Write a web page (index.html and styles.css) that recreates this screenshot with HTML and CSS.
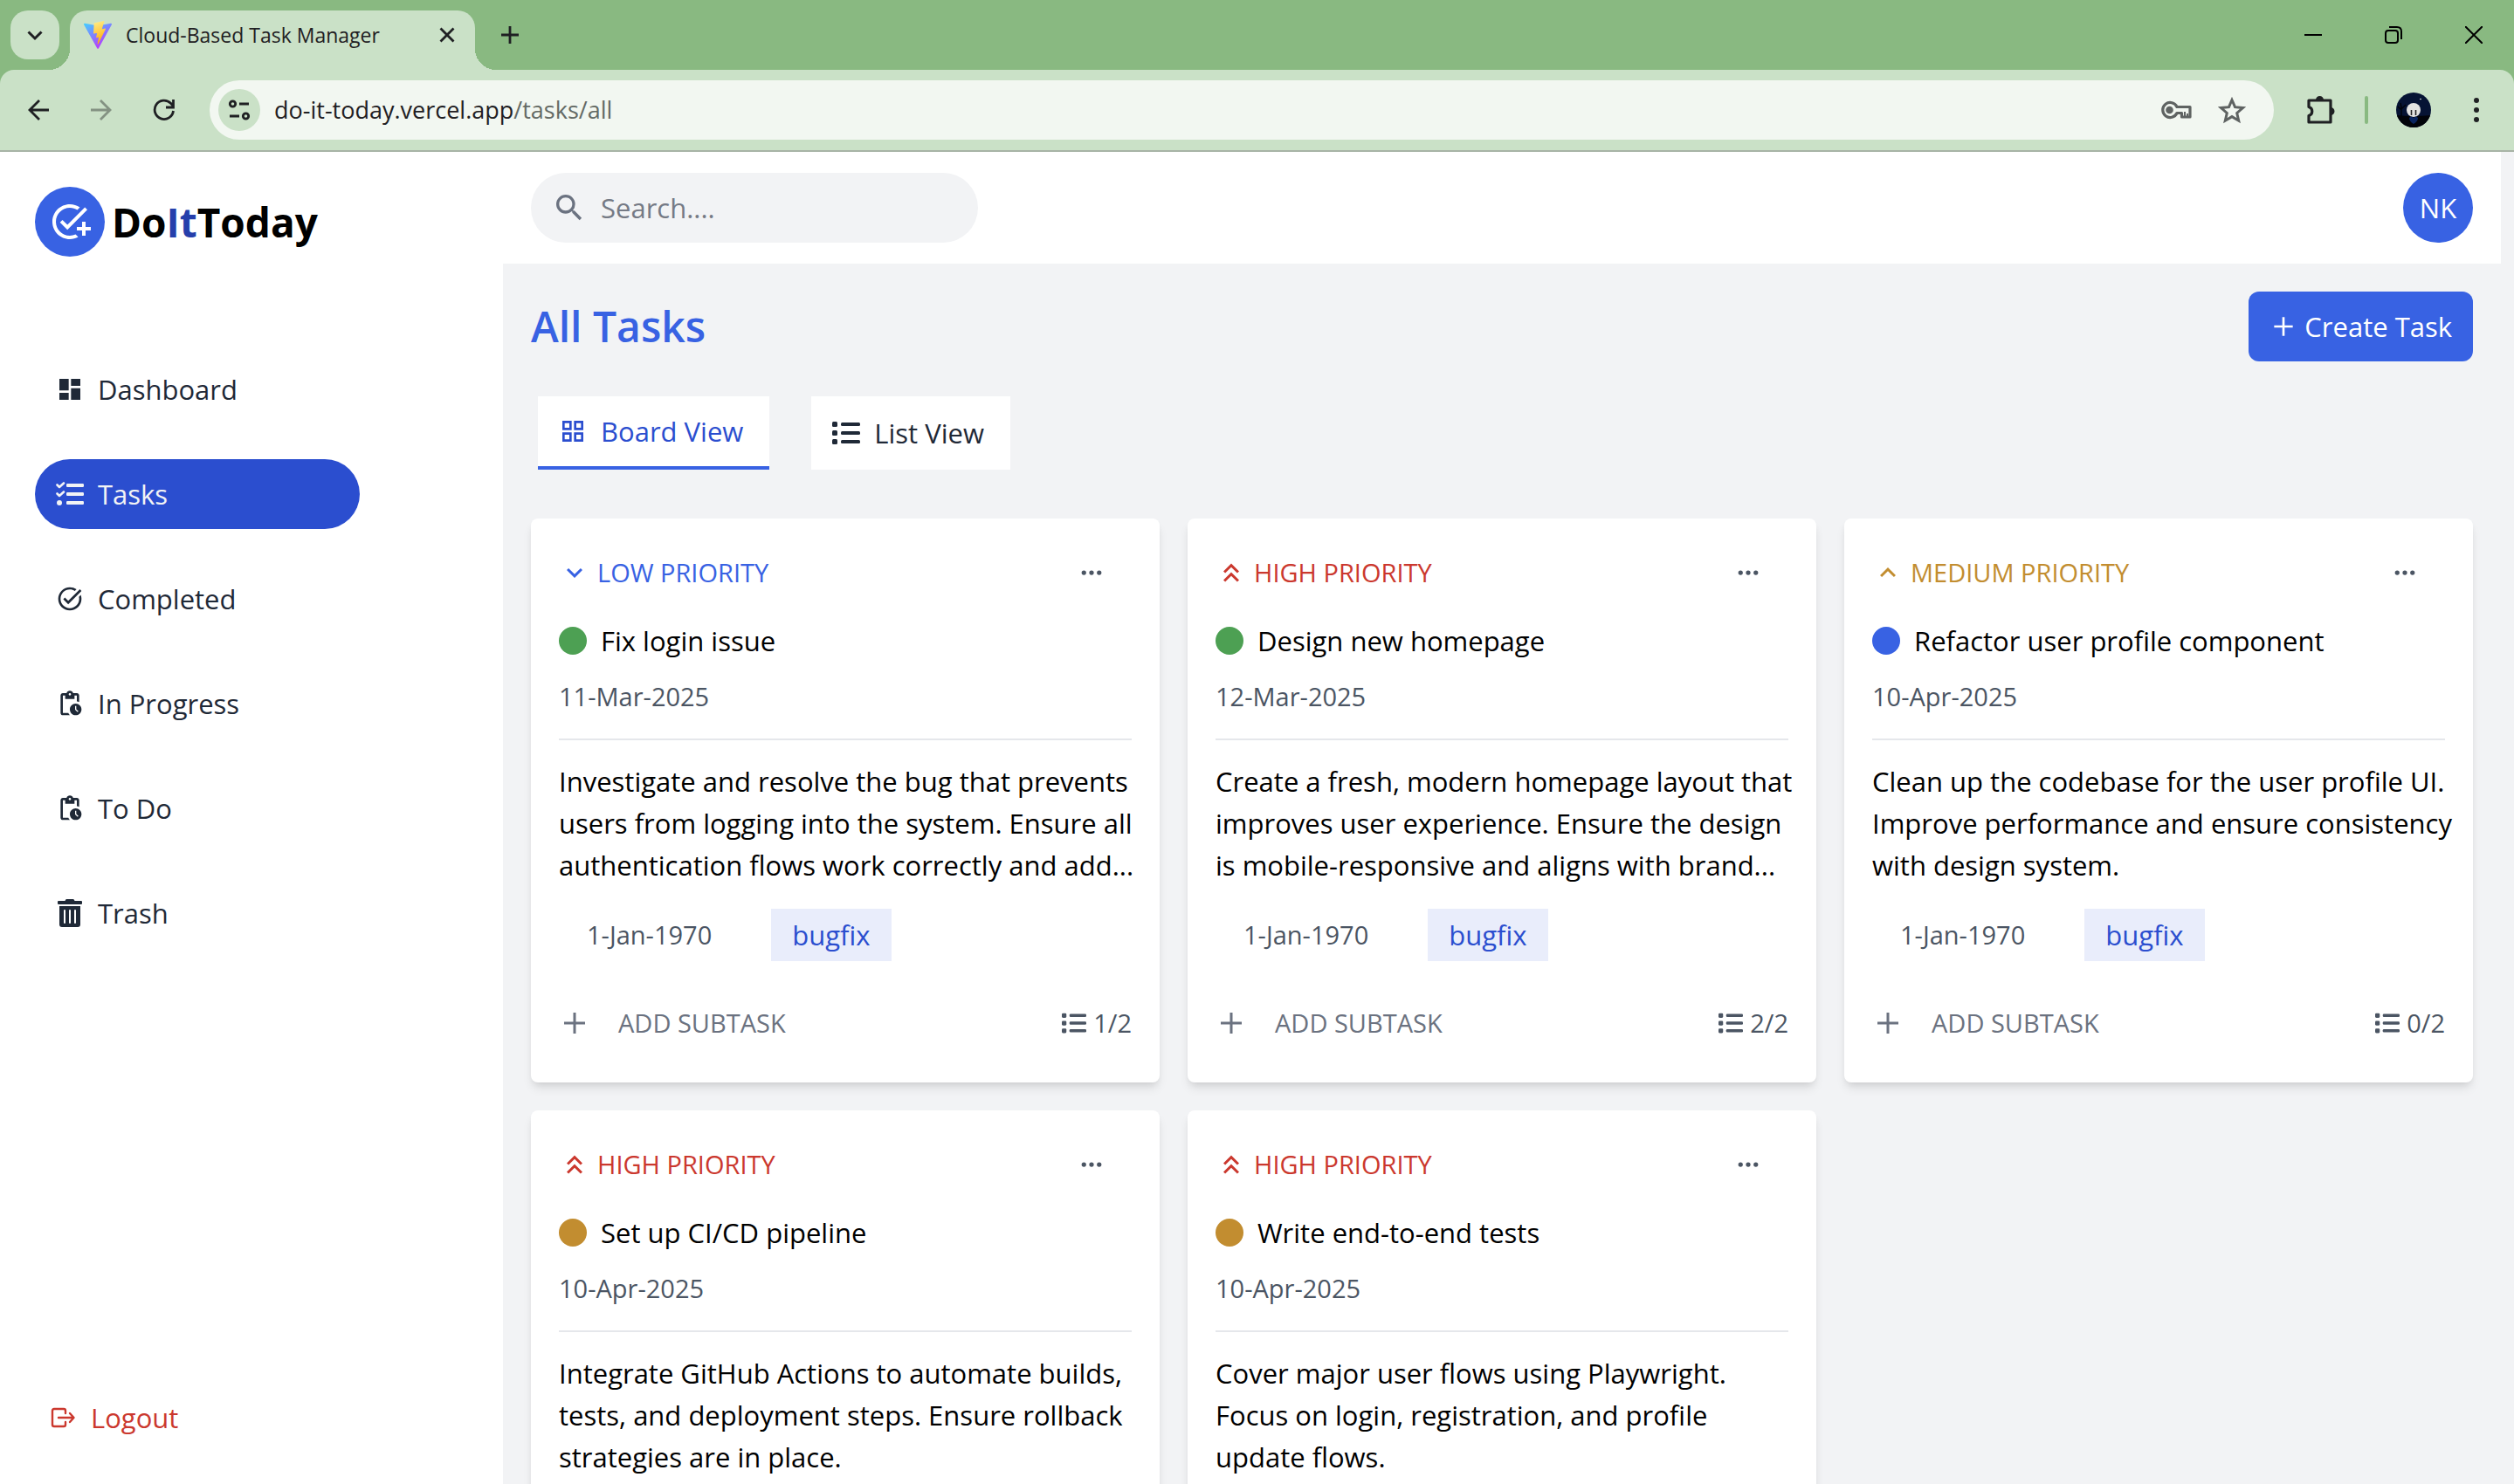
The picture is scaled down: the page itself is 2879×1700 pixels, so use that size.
FILE: index.html
```html
<!DOCTYPE html>
<html lang="en">
<head>
<meta charset="utf-8">
<meta name="viewport" content="width=device-width, initial-scale=1">
<title>Cloud-Based Task Manager</title>
<link rel="stylesheet" href="styles.css">
</head>
<body>
<svg class="sprite" aria-hidden="true">
  <symbol id="i-dashboard" viewBox="0 0 24 24"><path d="M3 13h8V3H3v10zm0 8h8v-6H3v6zm10 0h8V11h-8v10zm0-18v6h8V3h-8z"/></symbol>
  <symbol id="i-tasks" viewBox="0 0 32 32"><g fill="none" stroke="currentColor" stroke-width="2.6" stroke-linecap="round" stroke-linejoin="round"><path d="M1.5 5.5 4 8l5-4.5M1.5 15.5 4 18l5-4.5"/></g><circle cx="4" cy="26" r="3"/><rect x="12" y="4" width="20" height="4" rx="1.2"/><rect x="12" y="14" width="20" height="4" rx="1.2"/><rect x="12" y="24" width="20" height="4" rx="1.2"/></symbol>
  <symbol id="i-done" viewBox="0 0 24 24"><path d="M22 5.18 10.59 16.6l-4.24-4.24 1.41-1.41 2.83 2.83 10-10L22 5.18zm-2.21 5.04c.13.57.21 1.17.21 1.78 0 4.42-3.58 8-8 8s-8-3.58-8-8 3.58-8 8-8c1.58 0 3.04.46 4.28 1.25l1.44-1.44A9.9 9.9 0 0 0 12 2C6.48 2 2 6.48 2 12s4.48 10 10 10 10-4.48 10-10c0-1.19-.22-2.33-.6-3.39l-1.61 1.61z"/></symbol>
  <symbol id="i-pending" viewBox="0 0 24 24"><path d="M17 12c-2.76 0-5 2.24-5 5s2.24 5 5 5 5-2.24 5-5-2.24-5-5-5zm1.65 7.35L16.5 17.2V14h1v2.79l1.85 1.85-.7.71zM18 3h-3.18C14.4 1.84 13.3 1 12 1s-2.4.84-2.82 2H6c-1.1 0-2 .9-2 2v15c0 1.1.9 2 2 2h6.11a6.743 6.743 0 0 1-1.42-2H6V5h2v3h8V5h2v5.08c.71.1 1.38.31 2 .6V5c0-1.1-.9-2-2-2zm-6 2c-.55 0-1-.45-1-1s.45-1 1-1 1 .45 1 1-.45 1-1 1z"/></symbol>
  <symbol id="i-trash" viewBox="0 0 448 512"><path d="M32 464a48 48 0 0 0 48 48h288a48 48 0 0 0 48-48V128H32zm272-256a16 16 0 0 1 32 0v224a16 16 0 0 1-32 0zm-96 0a16 16 0 0 1 32 0v224a16 16 0 0 1-32 0zm-96 0a16 16 0 0 1 32 0v224a16 16 0 0 1-32 0zM432 32H312l-9.4-18.7A24 24 0 0 0 281.1 0H166.8a23.72 23.72 0 0 0-21.4 13.3L136 32H16A16 16 0 0 0 0 48v32a16 16 0 0 0 16 16h416a16 16 0 0 0 16-16V48a16 16 0 0 0-16-16z"/></symbol>
  <symbol id="i-logout" viewBox="0 0 32 32"><path fill="none" stroke="currentColor" stroke-width="2.4" stroke-linecap="round" stroke-linejoin="round" d="M19 11V8q0-2-2-2H6Q4 6 4 8v16q0 2 2 2h11q2 0 2-2v-3M11 16h17M24 11l4.5 5L24 21"/></symbol>
  <symbol id="i-add-task" viewBox="0 0 24 24"><path d="M22 5.18 10.59 16.6l-4.24-4.24 1.41-1.41 2.83 2.83 10-10L22 5.18zM12 20c-4.41 0-8-3.59-8-8s3.59-8 8-8c1.57 0 3.04.46 4.28 1.25l1.45-1.45A10.02 10.02 0 0 0 12 2C6.48 2 2 6.48 2 12s4.48 10 10 10c1.73 0 3.36-.44 4.78-1.22l-1.5-1.5c-1 .46-2.11.72-3.28.72zm7-5h-3v2h3v3h2v-3h3v-2h-3v-3h-2v3z"/></symbol>
  <symbol id="i-search" viewBox="0 0 24 24"><path d="M15.5 14h-.79l-.28-.27A6.471 6.471 0 0 0 16 9.5 6.5 6.5 0 1 0 9.5 16c1.61 0 3.09-.59 4.23-1.57l.27.28v.79l5 4.99L20.49 19l-4.99-5zm-6 0C7.01 14 5 11.99 5 9.5S7.01 5 9.5 5 14 7.01 14 9.5 11.99 14 9.5 14z"/></symbol>
  <symbol id="i-plus" viewBox="0 0 24 24"><path fill="none" stroke="currentColor" stroke-width="2" d="M12 4v16M4 12h16"/></symbol>
  <symbol id="i-grid" viewBox="0 0 24 24"><path fill="none" stroke="currentColor" stroke-width="2" d="M4 4h6v6H4zM14 4h6v6h-6zM4 14h6v6H4zM14 14h6v6h-6z"/></symbol>
  <symbol id="i-list" viewBox="0 0 32 32"><rect y="3" width="6" height="6" rx="1.5"/><rect y="13" width="6" height="6" rx="1.5"/><rect y="23" width="6" height="6" rx="1.5"/><rect x="10" y="4" width="22" height="4" rx="1.5"/><rect x="10" y="14" width="22" height="4" rx="1.5"/><rect x="10" y="24" width="22" height="4" rx="1.5"/></symbol>
  <symbol id="i-low" viewBox="0 0 24 24"><path d="M7.41 8.59 12 13.17l4.59-4.58L18 10l-6 6-6-6z"/></symbol>
  <symbol id="i-medium" viewBox="0 0 24 24"><path d="M7.41 15.41 12 10.83l4.59 4.58L18 14l-6-6-6 6z"/></symbol>
  <symbol id="i-high" viewBox="0 0 24 24"><path d="M6 17.59 7.41 19 12 14.42 16.59 19 18 17.59l-6-6zM6 11l1.41 1.41L12 7.83l4.59 4.58L18 11l-6-6z"/></symbol>
  <symbol id="i-dots" viewBox="0 0 16 16"><circle cx="3" cy="8" r="1.5"/><circle cx="8" cy="8" r="1.5"/><circle cx="13" cy="8" r="1.5"/></symbol>
</svg>

<header class="browser">
  <div class="tabstrip">
    <button class="tab-search" aria-label="Search tabs"><svg width="24" height="24" viewBox="0 0 24 24"><path class="line" stroke-width="3" d="M4.5 8.5 12 16l7.5-7.5"/></svg></button>
    <div class="browser-tab">
      <svg class="favicon" width="32" height="32" viewBox="0 0 32 32">
        <defs>
          <linearGradient id="v1" x1="0" y1="0" x2=".6" y2="1"><stop offset="0" stop-color="#41d1ff"/><stop offset="1" stop-color="#bd34fe"/></linearGradient>
          <linearGradient id="v2" x1=".4" y1="0" x2=".6" y2="1"><stop offset="0" stop-color="#ffea83"/><stop offset="1" stop-color="#ffa800"/></linearGradient>
        </defs>
        <path fill="url(#v1)" d="M31.9 4.2 17 31.2a1 1 0 0 1-1.8 0L.1 4.2c-.4-.7.2-1.5 1-1.4L16 5.5l14.9-2.7c.8-.1 1.4.7 1 1.4z"/>
        <path fill="url(#v2)" d="M23 0 12 2.2a.4.4 0 0 0-.3.4L11 14.2c0 .3.2.5.5.4l3-.7c.3-.1.5.2.5.5l-.9 4.4c-.1.3.2.6.5.5l1.9-.6c.3-.1.6.2.5.5l-1.4 7c-.1.4.5.7.8.3l8.6-17.3c.1-.3-.1-.6-.5-.6l-3.1.6c-.3.1-.5-.2-.5-.5L23.4.5c.1-.3-.1-.5-.4-.5z"/>
      </svg>
      <span class="browser-tab-title">Cloud-Based Task Manager</span>
      <button class="icon-button" aria-label="Close tab"><svg width="24" height="24" viewBox="0 0 24 24"><path class="line" stroke-width="2.8" d="m4.5 4.5 15 15m0-15-15 15"/></svg></button>
    </div>
    <button class="icon-button new-tab" aria-label="New tab"><svg width="24" height="24" viewBox="0 0 24 24"><path class="line" stroke-width="2.8" d="M12 2v20M2 12h20"/></svg></button>
    <div class="window-controls">
      <button class="icon-button" aria-label="Minimize"><svg width="20" height="20" viewBox="0 0 20 20"><path class="line" stroke-width="2" d="M0 10h20"/></svg></button>
      <button class="icon-button" aria-label="Restore"><svg width="20" height="20" viewBox="0 0 20 20"><rect class="line" x="1" y="5" width="14" height="14" rx="3" stroke-width="2"/><path class="line" stroke-width="2" d="M5 1h9q5 0 5 5v9"/></svg></button>
      <button class="icon-button" aria-label="Close"><svg width="20" height="20" viewBox="0 0 20 20"><path class="line" stroke-width="2" d="m0 0 20 20M20 0 0 20"/></svg></button>
    </div>
  </div>
  <div class="toolbar">
    <div class="toolbar-nav">
      <button class="icon-button" aria-label="Back"><svg width="24" height="24" viewBox="0 0 24 24"><path class="line" stroke-width="2.8" d="M24 12H2M13 1 2 12l11 11"/></svg></button>
      <button class="icon-button is-disabled" aria-label="Forward" disabled><svg width="24" height="24" viewBox="0 0 24 24"><path class="line" stroke-width="2.8" d="M0 12h22M11 1l11 11-11 11"/></svg></button>
      <button class="icon-button" aria-label="Reload"><svg width="26" height="26" viewBox="0 0 26 26"><path class="line" stroke-width="2.8" d="M23.5 14A10.7 10.7 0 1 1 20.5 5.3L23 8M23.5 1v9H15"/></svg></button>
    </div>
    <div class="omnibox">
      <button class="site-info" aria-label="View site information"><svg width="28" height="28" viewBox="0 0 28 28"><g class="line" stroke-width="2.8"><circle cx="6.5" cy="7" r="3.2"/><path d="M14 7h11M3 21h11"/><circle cx="21.5" cy="21" r="3.2"/></g></svg></button>
      <div class="url" role="textbox" aria-label="Address" contenteditable="true" spellcheck="false">do-it-today.vercel.app<span class="url-path">/tasks/all</span></div>
      <button class="icon-button" aria-label="Passwords"><svg width="36" height="24" viewBox="0 0 36 24"><g class="line" stroke-width="3.2" stroke-linejoin="round"><path d="M19 8.5A8.5 8.5 0 1 0 19 15.5h5.5V20h9.5V8.5z"/><path stroke-width="2" d="M28 19v-5M31 19v-3"/></g><circle cx="10.5" cy="12" r="4.3"/></svg></button>
      <button class="icon-button" aria-label="Bookmark this tab"><svg width="32" height="32" viewBox="0 0 32 32"><path class="line" stroke-width="3" d="m16 4.500 3.500 8.200 9 .8-6.800 6 2 8.700-7.700-4.600-7.700 4.600 2-8.700-6.800-6 9-.8z"/></svg></button>
    </div>
    <button class="icon-button extensions" aria-label="Extensions"><svg width="34" height="34" viewBox="0 0 34 34"><path class="line" stroke-width="3.2" stroke-linejoin="round" d="M3 6h25v25H3v-7.5a5.200 5.200 0 0 0 0-10z"/><path d="M11 5.500a4.500 4.500 0 0 1 9 0zM28 14a4.500 4.500 0 0 1 0 9z"/></svg></button>
    <span class="toolbar-divider"></span>
    <button class="profile" aria-label="Profile"><svg width="40" height="40" viewBox="0 0 40 40"><path fill="#061334" d="M0 0h40v40H0z"/><path d="M0 26q20 2 40 0v14H0z" fill="#02040a"/><path fill="none" stroke="#010309" stroke-width="1.4" d="M6 27V16M6 20l-4-4M6 19l5-5M6 17l-1-5"/><circle cx="20" cy="20" r="8" fill="#e4e4e2"/><path d="M17.500 20v6M22.500 20v6" stroke="#222" stroke-width="1.6"/><path d="M15 29q2.500-3 5 0 2.500-3 5 0 0 4-5 7-5-3-5-7" fill="#0a2560"/><circle cx="28" cy="7.500" r=".8" fill="#fff"/></svg></button>
    <button class="icon-button browser-menu" aria-label="Menu"><svg width="8" height="28" viewBox="0 0 8 28"><circle cx="4" cy="3" r="3"/><circle cx="4" cy="14" r="3"/><circle cx="4" cy="25" r="3"/></svg></button>
  </div>
</header>

<div class="app">
  <aside class="sidebar">
    <a class="brand" href="#">
      <span class="brand-mark"><svg class="icon-xl"><use href="#i-add-task"/></svg></span>
      <span class="brand-name">Do<span class="brand-accent">It</span>Today</span>
    </a>
    <nav class="nav">
      <a class="nav-link" href="#"><svg class="icon"><use href="#i-dashboard"/></svg>Dashboard</a>
      <a class="nav-link is-active" href="#" aria-current="page"><svg class="icon"><use href="#i-tasks"/></svg>Tasks</a>
      <a class="nav-link" href="#"><svg class="icon"><use href="#i-done"/></svg>Completed</a>
      <a class="nav-link" href="#"><svg class="icon"><use href="#i-pending"/></svg>In Progress</a>
      <a class="nav-link" href="#"><svg class="icon"><use href="#i-pending"/></svg>To Do</a>
      <a class="nav-link" href="#"><svg class="icon"><use href="#i-trash"/></svg>Trash</a>
    </nav>
    <button class="logout"><svg class="icon"><use href="#i-logout"/></svg>Logout</button>
  </aside>

  <div class="content">
    <div class="topbar">
      <label class="search"><svg class="icon-lg"><use href="#i-search"/></svg><input type="text" placeholder="Search...." aria-label="Search"></label>
      <button class="avatar">NK</button>
    </div>

    <main class="main">
      <div class="page-head">
        <h1>All Tasks</h1>
        <button class="create"><svg class="icon"><use href="#i-plus"/></svg>Create Task</button>
      </div>

      <div class="views" role="tablist">
        <button class="view is-selected" role="tab" aria-selected="true"><svg class="icon"><use href="#i-grid"/></svg>Board View</button>
        <button class="view" role="tab" aria-selected="false"><svg class="icon"><use href="#i-list"/></svg>List View</button>
      </div>

      <div class="board">
        <article class="card">
          <div class="card-head"><span class="priority low"><svg class="icon-md"><use href="#i-low"/></svg>LOW PRIORITY</span><button class="more" aria-label="Task options"><svg class="icon-sm"><use href="#i-dots"/></svg></button></div>
          <h2 class="card-title"><span class="dot completed"></span>Fix login issue</h2>
          <time class="date">11-Mar-2025</time>
          <p class="description">Investigate and resolve the bug that prevents<br>users from logging into the system. Ensure all<br>authentication flows work correctly and add...</p>
          <div class="subtask"><time>1-Jan-1970</time><span class="tag">bugfix</span></div>
          <div class="card-foot"><button class="add"><svg class="icon-md"><use href="#i-plus"/></svg>ADD SUBTASK</button><span class="count"><svg class="icon-sm"><use href="#i-list"/></svg>1/2</span></div>
        </article>
        <article class="card">
          <div class="card-head"><span class="priority high"><svg class="icon-md"><use href="#i-high"/></svg>HIGH PRIORITY</span><button class="more" aria-label="Task options"><svg class="icon-sm"><use href="#i-dots"/></svg></button></div>
          <h2 class="card-title"><span class="dot completed"></span>Design new homepage</h2>
          <time class="date">12-Mar-2025</time>
          <p class="description">Create a fresh, modern homepage layout that<br>improves user experience. Ensure the design<br>is mobile-responsive and aligns with brand...</p>
          <div class="subtask"><time>1-Jan-1970</time><span class="tag">bugfix</span></div>
          <div class="card-foot"><button class="add"><svg class="icon-md"><use href="#i-plus"/></svg>ADD SUBTASK</button><span class="count"><svg class="icon-sm"><use href="#i-list"/></svg>2/2</span></div>
        </article>
        <article class="card">
          <div class="card-head"><span class="priority medium"><svg class="icon-md"><use href="#i-medium"/></svg>MEDIUM PRIORITY</span><button class="more" aria-label="Task options"><svg class="icon-sm"><use href="#i-dots"/></svg></button></div>
          <h2 class="card-title"><span class="dot todo"></span>Refactor user profile component</h2>
          <time class="date">10-Apr-2025</time>
          <p class="description">Clean up the codebase for the user profile UI.<br>Improve performance and ensure consistency<br>with design system.</p>
          <div class="subtask"><time>1-Jan-1970</time><span class="tag">bugfix</span></div>
          <div class="card-foot"><button class="add"><svg class="icon-md"><use href="#i-plus"/></svg>ADD SUBTASK</button><span class="count"><svg class="icon-sm"><use href="#i-list"/></svg>0/2</span></div>
        </article>
        <article class="card">
          <div class="card-head"><span class="priority high"><svg class="icon-md"><use href="#i-high"/></svg>HIGH PRIORITY</span><button class="more" aria-label="Task options"><svg class="icon-sm"><use href="#i-dots"/></svg></button></div>
          <h2 class="card-title"><span class="dot progress"></span>Set up CI/CD pipeline</h2>
          <time class="date">10-Apr-2025</time>
          <p class="description">Integrate GitHub Actions to automate builds,<br>tests, and deployment steps. Ensure rollback<br>strategies are in place.</p>
        </article>
        <article class="card">
          <div class="card-head"><span class="priority high"><svg class="icon-md"><use href="#i-high"/></svg>HIGH PRIORITY</span><button class="more" aria-label="Task options"><svg class="icon-sm"><use href="#i-dots"/></svg></button></div>
          <h2 class="card-title"><span class="dot progress"></span>Write end-to-end tests</h2>
          <time class="date">10-Apr-2025</time>
          <p class="description">Cover major user flows using Playwright.<br>Focus on login, registration, and profile<br>update flows.</p>
        </article>
      </div>
    </main>
  </div>
</div>
</body>
</html>
```
FILE: styles.css
```css
:root {
  --blue: #3862e3;
  --blue-dark: #2b4ecf;
  --green: #4da053;
  --amber: #c28d30;
  --red: #cb382e;
  --ink: #1f2937;
  --gray: #4b5563;
  --gray-light: #6b7280;
  --page: #f2f3f5;
  --frame: #89b981;
  --bar: #cae1c7;
}

* { box-sizing: border-box; }

body {
  margin: 0;
  height: 100vh;
  overflow: hidden;
  display: flex;
  flex-direction: column;
  background: var(--page);
  color: #000;
  font: 400 31px/48px "Open Sans", "Noto Sans", sans-serif;
}

button, input { font: inherit; color: inherit; border: 0; padding: 0; background: none; }
a { color: inherit; text-decoration: none; }
h1, h2, p { margin: 0; font: inherit; }
svg { display: block; flex: none; fill: currentColor; }

.sprite { position: absolute; width: 0; height: 0; }
.line { fill: none; stroke: currentColor; }
.icon-sm { width: 28px; height: 28px; }
.icon { width: 32px; height: 32px; }
.icon-md { width: 36px; height: 36px; }
.icon-lg { width: 40px; height: 40px; }
.icon-xl { width: 48px; height: 48px; }

/* Browser frame */
.browser { flex: none; background: var(--frame); color: #1f2023; }
.tabstrip { display: flex; align-items: center; height: 80px; padding-left: 12px; }
.tab-search {
  display: grid;
  place-items: center;
  width: 56px;
  height: 56px;
  border-radius: 20px;
  background: var(--bar);
}
.browser-tab {
  position: relative;
  display: flex;
  align-items: center;
  align-self: flex-end;
  width: 464px;
  height: 68px;
  margin-left: 12px;
  padding: 0 20px 12px 16px;
  border-radius: 20px 20px 0 0;
  background: var(--bar);
}
.browser-tab::before, .browser-tab::after {
  content: "";
  position: absolute;
  bottom: 0;
  width: 24px;
  height: 24px;
}
.browser-tab::before { right: 100%; background: radial-gradient(circle at 0 0, transparent 24px, var(--bar) 24px); }
.browser-tab::after { left: 100%; background: radial-gradient(circle at 100% 0, transparent 24px, var(--bar) 24px); }
.browser-tab-title { flex: 1; padding-left: 16px; font-size: 23px; line-height: 32px; }
.icon-button { display: grid; place-items: center; height: 56px; }
.new-tab { margin-left: 28px; }
.window-controls { display: flex; margin-left: auto; color: #000; }
.window-controls .icon-button { width: 92px; }

.toolbar {
  display: flex;
  align-items: center;
  height: 94px;
  padding: 0 7px 0 8px;
  border-bottom: 2px solid #a8b4a6;
  border-radius: 16px 16px 0 0;
  background: var(--bar);
}
.toolbar-nav { display: flex; }
.toolbar-nav .icon-button { width: 72px; }
.is-disabled { color: #839282; }
.omnibox {
  flex: 1;
  display: flex;
  align-items: center;
  gap: 16px;
  height: 68px;
  margin: 0 16px;
  padding: 0 24px 0 10px;
  border-radius: 34px;
  background: #f2f7f1;
}
.omnibox .icon-button { width: 48px; color: #5f6362; }
.site-info {
  display: grid;
  place-items: center;
  width: 48px;
  height: 48px;
  border-radius: 50%;
  background: var(--bar);
}
.url { flex: 1; font-size: 27px; line-height: 40px; }
.url-path { color: #646a65; }
.extensions { width: 76px; }
.toolbar-divider { width: 4px; height: 32px; margin: 0 32px 0 12px; border-radius: 2px; background: var(--frame); }
.profile { border-radius: 50%; overflow: hidden; }
.browser-menu { width: 72px; margin-left: 16px; }

/* App shell */
.app { flex: 1; min-height: 0; display: grid; grid-template-columns: 576px minmax(0, 1fr); }
.sidebar {
  display: flex;
  flex-direction: column;
  align-items: flex-start;
  padding: 40px 40px 52px;
  background: #fff;
}
.brand { display: flex; align-items: center; gap: 8px; font-size: 46px; font-weight: 700; }
.brand-mark {
  display: grid;
  place-items: center;
  width: 80px;
  height: 80px;
  border-radius: 50%;
  background: var(--blue);
  color: #fff;
}
.brand-accent { color: #263fab; }
.nav { display: flex; flex-direction: column; gap: 40px; width: 372px; margin-top: 112px; }
.nav-link {
  display: flex;
  align-items: center;
  gap: 16px;
  height: 80px;
  padding: 0 24px;
  border-radius: 40px;
  color: var(--ink);
}
.nav-link.is-active { background: var(--blue-dark); color: var(--page); }
.logout { display: flex; align-items: center; gap: 16px; margin-top: auto; padding: 0 16px; color: var(--red); }

.content { min-height: 0; padding-right: 15px; overflow: hidden; }
.topbar {
  display: flex;
  align-items: center;
  justify-content: space-between;
  padding: 24px 32px;
  background: #fff;
}
.search {
  display: flex;
  align-items: center;
  gap: 16px;
  width: 512px;
  height: 80px;
  padding: 0 24px;
  border-radius: 40px;
  background: var(--page);
  color: var(--gray-light);
}
.search input { flex: 1; min-width: 0; outline: 0; }
.search input::placeholder { color: #757a85; opacity: 1; }
.avatar { width: 80px; height: 80px; border-radius: 50%; background: var(--blue); color: #fff; font-weight: 500; }

.main { padding: 32px; }
.page-head { display: flex; align-items: center; justify-content: space-between; }
.page-head h1 { color: var(--blue); font-size: 48px; font-weight: 600; }
.create {
  display: flex;
  align-items: center;
  gap: 8px;
  height: 80px;
  padding: 0 24px;
  border-radius: 12px;
  background: var(--blue);
  color: #fff;
}

.views { display: flex; gap: 48px; margin: 40px 0 56px; padding: 0 8px; }
.view {
  display: flex;
  align-items: center;
  gap: 16px;
  height: 84px;
  padding: 0 30px 0 24px;
  background: #fff;
  color: var(--ink);
}
.view.is-selected { border-bottom: 4px solid var(--blue); color: var(--blue-dark); }

/* Task board */
.board { display: grid; grid-template-columns: repeat(3, minmax(0, 1fr)); gap: 32px; }
.card {
  display: flex;
  flex-direction: column;
  min-height: 646px;
  padding: 32px 32px 48px;
  border-radius: 8px;
  background: #fff;
  box-shadow: 0 8px 12px -2px rgb(0 0 0 / 10%), 0 4px 8px -4px rgb(0 0 0 / 10%);
  white-space: nowrap;
}
.card-head { display: flex; align-items: center; justify-content: space-between; height: 60px; }
.priority { display: flex; align-items: center; gap: 8px; font-size: 29px; line-height: 40px; }
.low { color: var(--blue); }
.medium { color: var(--amber); }
.high { color: var(--red); }
.more { padding: 0 32px; color: var(--gray); }
.card-title { display: flex; align-items: center; gap: 16px; margin-top: 24px; }
.dot { width: 32px; height: 32px; border-radius: 50%; }
.completed { background: var(--green); }
.todo { background: var(--blue); }
.progress { background: var(--amber); }
.date {
  margin-top: 20px;
  padding-bottom: 28px;
  border-bottom: 2px solid #e5e7eb;
  color: var(--gray);
  font-size: 29px;
  line-height: 40px;
}
.description { margin-top: 23px; }
.subtask { display: flex; align-items: center; gap: 68px; margin-top: 26px; padding-left: 32px; }
.subtask time { color: var(--gray); font-size: 29px; line-height: 40px; }
.tag { padding: 6px 24px; background: #e9edfb; color: var(--blue-dark); }
.card-foot {
  display: flex;
  align-items: center;
  justify-content: space-between;
  margin-top: 51px;
  font-size: 29px;
  line-height: 40px;
}
.add { display: flex; align-items: center; gap: 32px; color: var(--gray-light); }
.count { display: flex; align-items: center; gap: 8px; color: var(--gray); }
```
